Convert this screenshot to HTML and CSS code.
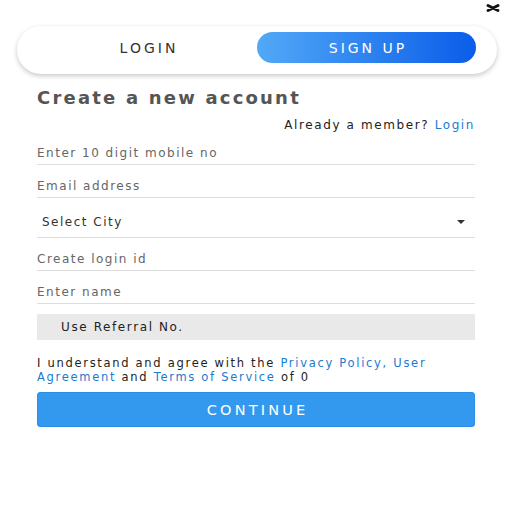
FILE: index.html
```html
<!DOCTYPE html>
<html lang="en">
<head>
  <meta charset="UTF-8" />
  <meta name="viewport" content="width=device-width, initial-scale=1.0"/>
  <title>Sign Up</title>
  <link rel="stylesheet" href="styles.css">
</head>
<body>

  <!-- Close -->
  <button class="close-btn" aria-label="Close">
    <svg width="14" height="8" viewBox="0 0 14 8"><path d="M2 1.5 L12 6.5 M12 1.5 L2 6.5" stroke="#111" stroke-width="2.8" stroke-linecap="round"/></svg>
  </button>

  <!-- Tabs -->
  <div class="tabs">
    <button class="tab">LOGIN</button>
    <button class="tab active">SIGN UP</button>
  </div>

  <!-- Form -->
  <form class="signup">
    <h1 class="title">Create a new account</h1>
    <p class="member">Already a member? <a href="#">Login</a></p>

    <input class="field" type="tel" placeholder="Enter 10 digit mobile no" />
    <input class="field" type="email" placeholder="Email address" />
    <div class="field select">
      <span>Select City</span>
      <span class="caret"></span>
    </div>
    <input class="field" type="text" placeholder="Create login id" />
    <input class="field" type="text" placeholder="Enter name" />

    <div class="referral">Use Referral No.</div>

    <p class="terms">I understand and agree with the <a href="#">Privacy Policy, User Agreement</a> and <a href="#">Terms of Service</a> of 0</p>

    <button type="button" class="continue">CONTINUE</button>
  </form>

</body>
</html>
```

FILE: styles.css
```css
* {
  margin: 0;
  padding: 0;
  box-sizing: border-box;
}

body {
  font-family: "DejaVu Sans", Verdana, sans-serif;
  background-color: white;
  color: #333;
  position: relative;
  padding-top: 26px;
}

button {
  font-family: inherit;
  background: none;
  border: none;
  cursor: pointer;
}

.close-btn {
  position: absolute;
  top: 4px;
  right: 12px;
  line-height: 0;
}

.tabs {
  margin: 0 15px 0 17px;
  display: flex;
  padding: 6px 21px 11px;
  border-radius: 26px;
  background: #fff;
  box-shadow: 0 2px 5px rgba(0, 0, 0, 0.22);
}

.tab {
  flex: 1;
  height: 31px;
  padding-left: 3px;
  border-radius: 16px;
  font-size: 14px;
  letter-spacing: 3px;
  color: #333;
}

.tab.active {
  color: white;
  background: linear-gradient(to right, #52a9f6, #0a5de9);
}

.signup {
  padding: 0 37px;
  display: flex;
  flex-direction: column;
}

.title {
  margin-top: 13px;
  font-size: 18px;
  line-height: 22px;
  font-weight: bold;
  color: #555;
  letter-spacing: 2.2px;
}

.member {
  margin-top: 9px;
  text-align: right;
  font-size: 12px;
  line-height: 14px;
  letter-spacing: 1.6px;
  color: #222;
}

a {
  color: #1a7bd0;
  text-decoration: none;
}

.field {
  display: block;
  width: 100%;
  height: 33px;
  padding: 13px 0 3px;
  border: none;
  border-bottom: 1px solid #ddd;
  font-family: inherit;
  font-size: 12px;
  letter-spacing: 1.5px;
  line-height: 16px;
  outline: none;
  color: #333;
}

.field::placeholder {
  color: #666;
}

.select {
  height: 40px;
  padding: 16px 10px 7px 5px;
  display: flex;
  align-items: center;
  justify-content: space-between;
  color: #333;
}

.caret {
  width: 0;
  height: 0;
  border-left: 4px solid transparent;
  border-right: 4px solid transparent;
  border-top: 4px solid #333;
}

.referral {
  margin-top: 10px;
  height: 26px;
  padding-left: 24px;
  display: flex;
  align-items: center;
  background: #e9e9e9;
  font-size: 12px;
  letter-spacing: 1.6px;
  color: #222;
}

.terms {
  margin-top: 16px;
  font-size: 11.5px;
  line-height: 14px;
  letter-spacing: 1.7px;
  color: #222;
}

.continue {
  margin-top: 8px;
  height: 35px;
  padding-left: 3.2px;
  border-radius: 3px;
  background: #3399ee;
  border: 1px solid #2a8ee6;
  color: white;
  font-size: 14.5px;
  letter-spacing: 3.2px;
}
```
